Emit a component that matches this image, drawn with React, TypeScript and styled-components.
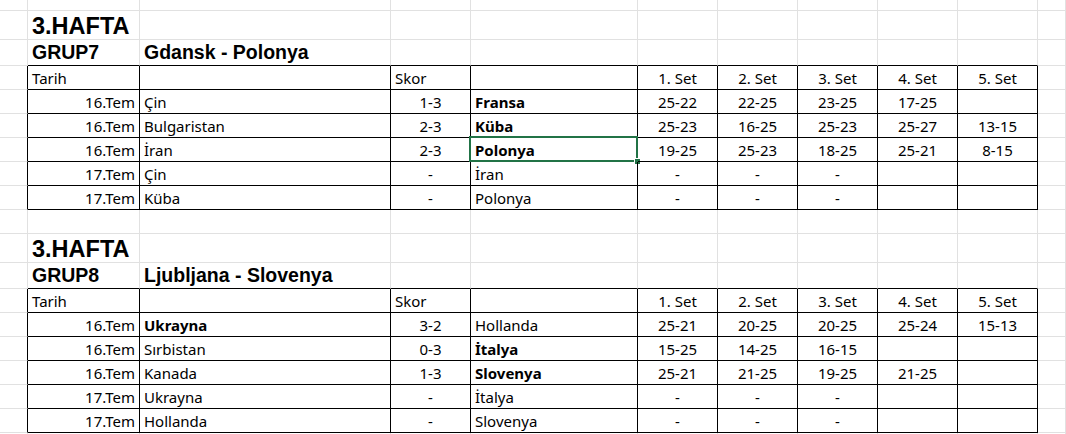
import React from 'react';
import styled, { createGlobalStyle, css } from 'styled-components';

const GlobalStyle = createGlobalStyle`
  html, body { margin: 0; padding: 0; background: #ffffff; }
  body { font-family: 'Noto Sans', 'Liberation Sans', sans-serif; color: #000; overflow: hidden; }
`;

type Align = 'left' | 'right' | 'center';
type Kind = 'data' | 'title' | 'group';

interface CellData {
  text?: string;
  align?: Align;
  bold?: boolean;
  kind?: Kind;
  selected?: boolean;
}

const GRID = '#e1e1e1';
const INK = '#000000';

const Sheet = styled.div<{ $rows: string }>`
  display: grid;
  grid-template-columns: 28px 112px 251px 80px 167px repeat(5, 80px) 1fr;
  grid-template-rows: ${(p) => p.$rows};
  width: 1066px;
  height: 434px;
  overflow: hidden;
  background: #ffffff;
`;

const kindStyles = {
  data: css`
    font-family: 'Noto Sans', 'Liberation Sans', sans-serif;
    font-size: 15px;
    line-height: 20px;
    padding: 0 4px 1px 4px;
  `,
  title: css`
    font-family: 'Liberation Sans', Arial, sans-serif;
    font-weight: 700;
    font-size: 23.5px;
    line-height: 26px;
    padding: 0 3px 0 4px;
  `,
  group: css`
    font-family: 'Liberation Sans', Arial, sans-serif;
    font-weight: 700;
    font-size: 19.5px;
    line-height: 22px;
    padding: 0 3px 2px 4px;
  `,
};

const Cell = styled.div<{ $align: Align; $bold: boolean; $kind: Kind; $rb: string; $bb: string }>`
  position: relative;
  box-sizing: border-box;
  display: flex;
  align-items: flex-end;
  justify-content: ${(p) => (p.$align === 'left' ? 'flex-start' : p.$align === 'right' ? 'flex-end' : 'center')};
  border-right: 1px solid ${(p) => p.$rb};
  border-bottom: 1px solid ${(p) => p.$bb};
  white-space: nowrap;
  min-width: 0;
  ${(p) => kindStyles[p.$kind]}
  ${(p) => p.$bold && p.$kind === 'data' && css`font-weight: 700;`}
`;

const Selection = styled.div`
  position: absolute;
  left: -2px;
  top: -2px;
  right: -1px;
  bottom: -1px;
  border: 2px solid #217346;
  pointer-events: none;
`;

const Handle = styled.span`
  position: absolute;
  right: -4px;
  bottom: -4px;
  width: 5px;
  height: 5px;
  background: #217346;
  box-shadow: 0 0 0 1px #ffffff;
`;

interface Match {
  date: string;
  home: string;
  homeBold?: boolean;
  score: string;
  away: string;
  awayBold?: boolean;
  sets: string[];
}

interface Group {
  week: string;
  code: string;
  venue: string;
  matches: Match[];
  selected?: number;
}

const groups: Group[] = [
  {
    week: '3.HAFTA',
    code: 'GRUP7',
    venue: 'Gdansk - Polonya',
    selected: 2,
    matches: [
      { date: '16.Tem', home: 'Çin', score: '1-3', away: 'Fransa', awayBold: true, sets: ['25-22', '22-25', '23-25', '17-25', ''] },
      { date: '16.Tem', home: 'Bulgaristan', score: '2-3', away: 'Küba', awayBold: true, sets: ['25-23', '16-25', '25-23', '25-27', '13-15'] },
      { date: '16.Tem', home: 'İran', score: '2-3', away: 'Polonya', awayBold: true, sets: ['19-25', '25-23', '18-25', '25-21', '8-15'] },
      { date: '17.Tem', home: 'Çin', score: '-', away: 'İran', sets: ['-', '-', '-', '', ''] },
      { date: '17.Tem', home: 'Küba', score: '-', away: 'Polonya', sets: ['-', '-', '-', '', ''] },
    ],
  },
  {
    week: '3.HAFTA',
    code: 'GRUP8',
    venue: 'Ljubljana - Slovenya',
    matches: [
      { date: '16.Tem', home: 'Ukrayna', homeBold: true, score: '3-2', away: 'Hollanda', sets: ['25-21', '20-25', '20-25', '25-24', '15-13'] },
      { date: '16.Tem', home: 'Sırbistan', score: '0-3', away: 'İtalya', awayBold: true, sets: ['15-25', '14-25', '16-15', '', ''] },
      { date: '16.Tem', home: 'Kanada', score: '1-3', away: 'Slovenya', awayBold: true, sets: ['25-21', '21-25', '19-25', '21-25', ''] },
      { date: '17.Tem', home: 'Ukrayna', score: '-', away: 'İtalya', sets: ['-', '-', '-', '', ''] },
      { date: '17.Tem', home: 'Hollanda', score: '-', away: 'Slovenya', sets: ['-', '-', '-', '', ''] },
    ],
  },
];

const NCOLS = 11;

const emptyRow = (): CellData[] => Array.from({ length: NCOLS }, () => ({}));

function buildSheet() {
  const rows: CellData[][] = [];
  const heights: number[] = [];
  const tableRows = new Set<number>();

  rows.push(emptyRow());
  heights.push(11);

  groups.forEach((g, gi) => {
    if (gi > 0) {
      rows.push(emptyRow());
      heights.push(24);
    }
    const title = emptyRow();
    title[1] = { text: g.week, kind: 'title' };
    rows.push(title);
    heights.push(29);

    const grp = emptyRow();
    grp[1] = { text: g.code, kind: 'group' };
    grp[2] = { text: g.venue, kind: 'group' };
    rows.push(grp);
    heights.push(26);

    const head = emptyRow();
    head[1] = { text: 'Tarih' };
    head[3] = { text: 'Skor' };
    for (let i = 0; i < 5; i++) head[5 + i] = { text: `${i + 1}. Set`, align: 'center' };
    tableRows.add(rows.length);
    rows.push(head);
    heights.push(24);

    g.matches.forEach((m, mi) => {
      const r = emptyRow();
      r[1] = { text: m.date, align: 'right' };
      r[2] = { text: m.home, bold: m.homeBold };
      r[3] = { text: m.score, align: 'center' };
      r[4] = { text: m.away, bold: m.awayBold, selected: g.selected === mi };
      m.sets.forEach((s, si) => {
        r[5 + si] = { text: s, align: 'center' };
      });
      tableRows.add(rows.length);
      rows.push(r);
      heights.push(24);
    });
  });

  rows.push(emptyRow());
  heights.push(24);

  return { rows, heights, tableRows };
}

const { rows, heights, tableRows } = buildSheet();

const inTable = (r: number, c: number) => tableRows.has(r) && c >= 1 && c <= 9;

export default function App() {
  return (
    <>
      <GlobalStyle />
      <Sheet $rows={heights.map((h) => `${h}px`).join(' ')}>
        {rows.map((row, r) =>
          row.map((cell, c) => {
            const rb = inTable(r, c) || inTable(r, c + 1) ? INK : GRID;
            const bb = inTable(r, c) || inTable(r + 1, c) ? INK : GRID;
            return (
              <Cell
                key={`${r}-${c}`}
                $align={cell.align ?? 'left'}
                $bold={!!cell.bold}
                $kind={cell.kind ?? 'data'}
                $rb={rb}
                $bb={bb}
              >
                {cell.text}
                {cell.selected && (
                  <Selection>
                    <Handle />
                  </Selection>
                )}
              </Cell>
            );
          })
        )}
      </Sheet>
    </>
  );
}
